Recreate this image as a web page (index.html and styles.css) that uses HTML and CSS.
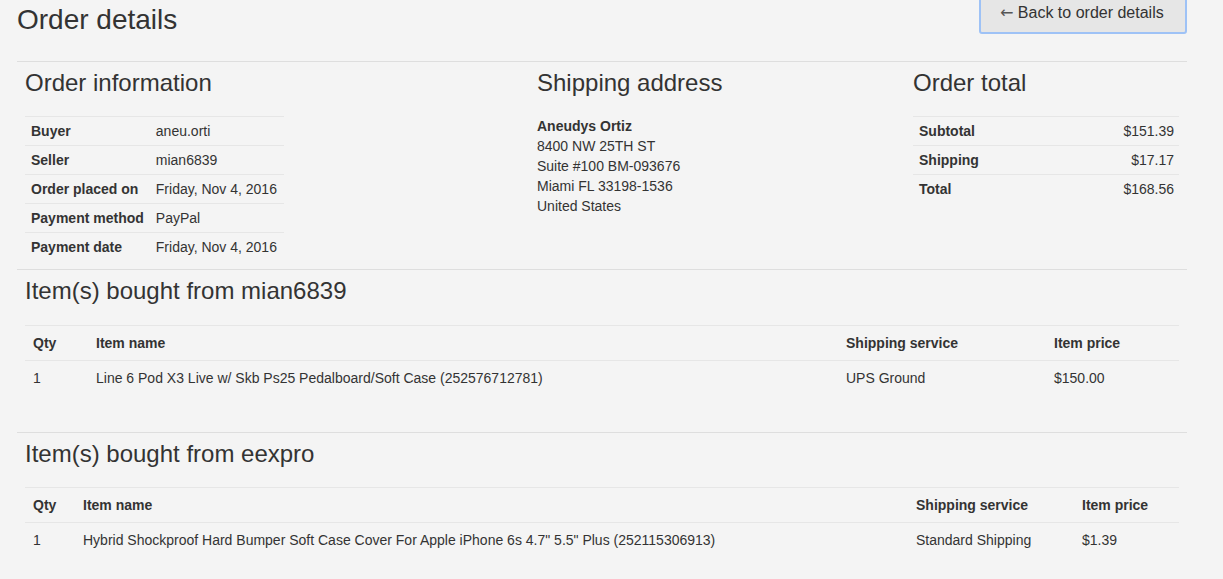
FILE: index.html
```html
<!DOCTYPE html>
<html lang="en">
<head>
<meta charset="utf-8">
<title>Order details</title>
<link rel="stylesheet" href="styles.css">
</head>
<body>
<div class="page">
  <header class="page-head">
    <h2 class="page-title">Order details</h2>
    <button class="btn-back" type="button"><span class="arrow">←</span> Back to order details</button>
  </header>
  <hr class="divider">

  <div class="summary">
    <section class="col col-info">
      <h3 class="sec-title">Order information</h3>
      <table class="kv kv-info">
        <tr><th>Buyer</th><td>aneu.orti</td></tr>
        <tr><th>Seller</th><td>mian6839</td></tr>
        <tr><th>Order placed on</th><td>Friday, Nov 4, 2016</td></tr>
        <tr><th>Payment method</th><td>PayPal</td></tr>
        <tr><th>Payment date</th><td>Friday, Nov 4, 2016</td></tr>
      </table>
    </section>
    <section class="col col-ship">
      <h3 class="sec-title">Shipping address</h3>
      <address class="addr">
        <strong>Aneudys Ortiz</strong><br>
        8400 NW 25TH ST<br>
        Suite #100 BM-093676<br>
        Miami FL 33198-1536<br>
        United States
      </address>
    </section>
    <section class="col col-total">
      <h3 class="sec-title">Order total</h3>
      <table class="kv kv-total">
        <tr><th>Subtotal</th><td>$151.39</td></tr>
        <tr><th>Shipping</th><td>$17.17</td></tr>
        <tr><th>Total</th><td>$168.56</td></tr>
      </table>
    </section>
  </div>

  <hr class="divider divider-sum">

  <section class="items items-a">
    <h3 class="sec-title item-title">Item(s) bought from mian6839</h3>
    <table class="items-table">
      <thead>
        <tr><th class="c-qty">Qty</th><th class="c-name">Item name</th><th class="c-ship">Shipping service</th><th class="c-price">Item price</th></tr>
      </thead>
      <tbody>
        <tr><td>1</td><td>Line 6 Pod X3 Live w/ Skb Ps25 Pedalboard/Soft Case (252576712781)</td><td>UPS Ground</td><td>$150.00</td></tr>
      </tbody>
    </table>
  </section>

  <hr class="divider divider-items">

  <section class="items items-b">
    <h3 class="sec-title item-title">Item(s) bought from eexpro</h3>
    <table class="items-table">
      <thead>
        <tr><th class="c-qty">Qty</th><th class="c-name">Item name</th><th class="c-ship">Shipping service</th><th class="c-price">Item price</th></tr>
      </thead>
      <tbody>
        <tr><td>1</td><td>Hybrid Shockproof Hard Bumper Soft Case Cover For Apple iPhone 6s 4.7" 5.5" Plus (252115306913)</td><td>Standard Shipping</td><td>$1.39</td></tr>
      </tbody>
    </table>
  </section>
</div>
</body>
</html>
```

FILE: styles.css
```css
html, body {
  margin: 0;
  padding: 0;
}

body {
  background: #f4f4f4;
  color: #333;
  font-family: "Liberation Sans", Arial, sans-serif;
  font-size: 14px;
  line-height: 20px;
  overflow: hidden;
}

.page {
  width: 1170px;
  margin-left: 17px;
}

.page-head {
  display: flex;
  justify-content: space-between;
  align-items: flex-start;
  height: 36px;
}

.page-title {
  margin: 4px 0 0;
  font-size: 28px;
  line-height: 31px;
  font-weight: 400;
  color: #333;
}

.btn-back {
  margin-top: -11px;
  width: 208px;
  height: 45px;
  padding: 10px 18px 8px 19px;
  text-align: left;
  background: #e6e6e6;
  border: 2px solid #9ec2f6;
  border-radius: 3px;
  color: #333;
  font-family: "Liberation Sans", Arial, sans-serif;
  font-size: 16px;
  line-height: 21px;
  white-space: nowrap;
}

.arrow {
  font-family: "DejaVu Sans", sans-serif;
  font-size: 16px;
  color: #555;
}

.divider {
  border: 0;
  border-top: 1px solid #dedede;
  margin: 25px 0 0;
  height: 0;
}

.summary {
  display: grid;
  grid-template-columns: 512px 376px 282px;
}

.col {
  padding-left: 8px;
}

.col-total {
  padding-right: 8px;
}

.sec-title {
  margin: 8px 0 20px;
  font-size: 24px;
  line-height: 26.4px;
  font-weight: 400;
  color: #333;
}

.kv {
  border-collapse: collapse;
}

.kv th,
.kv td {
  border-top: 1px solid #e6e6e6;
  padding: 4px 6px;
  line-height: 20px;
  text-align: left;
  white-space: nowrap;
}

.kv th {
  font-weight: 700;
}

.kv-info {
  width: 259px;
}

.kv-info th {
  width: 111px;
}

.kv-total {
  width: 100%;
}

.kv-total td {
  text-align: right;
  padding-right: 5px;
}

.addr {
  font-style: normal;
  line-height: 20px;
}

.divider-sum {
  margin-top: 8px;
}

.divider-items {
  margin-top: 36px;
}

.items {
  padding: 0 8px;
}

.item-title {
  margin-top: 8px;
}

.items-table {
  width: 100%;
  border-collapse: collapse;
  table-layout: fixed;
}

.items-table th,
.items-table td {
  text-align: left;
  line-height: 20px;
  white-space: nowrap;
}

.items-table th {
  font-weight: 700;
  padding: 7px 8px;
  border-top: 1px solid #e6e6e6;
  border-bottom: 1px solid #e6e6e6;
}

.items-table td {
  padding: 7px 8px 8px;
}

.items-a .c-qty { width: 47px; }
.items-a .c-name { width: 734px; }
.items-a .c-ship { width: 192px; }

.items-b .c-qty { width: 34px; }
.items-b .c-name { width: 817px; }
.items-b .c-ship { width: 150px; }
```
